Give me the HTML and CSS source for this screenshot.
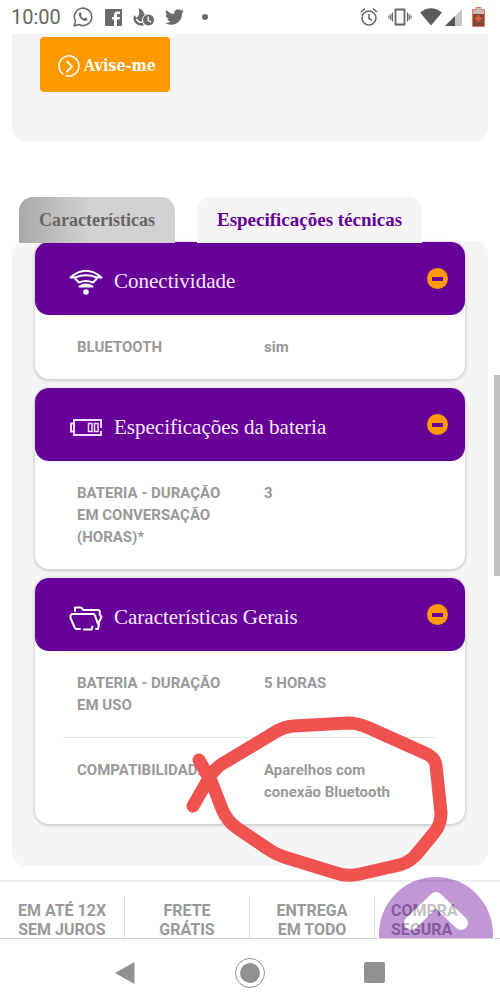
FILE: index.html
```html
<!DOCTYPE html>
<html lang="pt-BR">
<head>
<meta charset="utf-8">
<meta name="viewport" content="width=device-width, initial-scale=1">
<title>Especificações técnicas</title>
<link rel="stylesheet" href="styles.css">
</head>
<body>
<div class="phone">
  <header class="status">
    <span class="clock">10:00</span>
    <svg class="i-wa" viewBox="0 0 20 20" width="20" height="20"><path d="M1.2 18.8 2.5 14.100A8.700 8.700 0 1 1 6 17.500Z" fill="none" stroke="#6b6b6b" stroke-width="1.600" stroke-linejoin="round"/><path d="M6 6.200c.5-1.200 1.600-1.300 2-.5l.7 1.700c.1.400-.7 1-.7 1.400.7 1.400 1.800 2.300 3.100 2.900.5 0 1-1.200 1.500-1.100l1.800.9c.4.600-.3 1.900-1.200 2.300C10 14.800 4.800 9.500 6 6.200Z" fill="#6b6b6b"/></svg>
    <svg class="i-fb" viewBox="0 0 17 17" width="17" height="17"><rect width="17" height="17" rx="1" fill="#6b6b6b"/><path d="M9 17V10.500H7V8h2V6c0-2.600 1.500-3.600 3.500-3.600H15V5h-1.600c-1 0-1.400.4-1.400 1.300V8h3l-.4 2.500H12V17Z" fill="#fff"/></svg>
    <svg class="i-fire" viewBox="0 0 22 18" width="22" height="18"><path d="M5.500 0c5 2 6 4.500 5.200 7.500L12 5.500c1.500 1 1.500 2 1 3-4 2-4.300 6-2 9C4 18.500 0 14 .500 9.500L1.500 7l2 3C6.500 7 7 4 5.500 0Z" fill="#6b6b6b"/><path d="M3.500 11c1 2.500 3 3.500 5.500 3" stroke="#fff" stroke-width="1.500" fill="none"/><circle cx="15.500" cy="12" r="6" fill="#6b6b6b" stroke="#fff"/><path d="M15.200 8.500v4l3 1.500" fill="none" stroke="#fff" stroke-width="1.300"/></svg>
    <svg class="i-tw" viewBox="0 0 24 20" width="19" height="16"><path d="M23.950 2.570a10 10 0 0 1-2.820.77 4.960 4.960 0 0 0 2.160-2.720 9.900 9.900 0 0 1-3.120 1.180 4.920 4.920 0 0 0-8.380 4.480C7.690 6.100 4.070 4.130 1.640 1.160a4.820 4.820 0 0 0-.67 2.480c0 1.710.87 3.210 2.190 4.100a4.900 4.900 0 0 1-2.230-.62v.06a4.920 4.920 0 0 0 3.950 4.830 5 5 0 0 1-2.210.08 4.940 4.940 0 0 0 4.600 3.420A9.870 9.870 0 0 1 0 17.540a14 14 0 0 0 7.560 2.210c9.050 0 14-7.500 14-13.980 0-.21 0-.42-.02-.63a9.940 9.940 0 0 0 2.410-2.570Z" fill="#6b6b6b"/></svg>
    <span class="dot"></span>
    <svg class="i-alarm" viewBox="0 0 18 18" width="18" height="18"><g fill="none" stroke="#666" stroke-width="1.500"><circle cx="9" cy="10" r="7"/><path d="M9 6v4.500l3 1.800M1 4l4-3.300M17 4l-4-3.300"/></g></svg>
    <svg class="i-vib" viewBox="0 0 24 18" width="24" height="18"><path d="M7.500 1.500h9v15h-9Z" fill="none" stroke="#666" stroke-width="1.800"/><path d="M4.500 4.500v9M19.500 4.500v9M2.800 6v6M21.200 6v6M1 7.500v3M23 7.500v3" stroke="#666" stroke-width="1.200"/></svg>
    <svg class="i-wifi" viewBox="0 0 22 18" width="22" height="18"><path d="M0 4.500Q11-4 22 4.500L11 17.500Z" fill="#5c5c5c"/></svg>
    <svg class="i-sig" viewBox="0 0 17 17" width="17" height="17"><path d="M17 0v17H0Z" fill="#c6c6c6"/><path d="M10 7v10H0Z" fill="#555"/></svg>
    <svg class="i-bat" viewBox="0 0 13 20" width="13" height="20"><path d="M4 .5h5v2h3.500v17H.5v-17H4Z" fill="#7d4a36" stroke="#ee705f"/><path d="M4 1h5v2h3v4H1V3h3Z" fill="#c9bdb8"/><path d="M6.500 8v7M3 11.500h7" stroke="#f25a45" stroke-width="2"/></svg>
  </header>

  <main class="page">
    <section class="notify">
      <button class="notify-btn" type="button">
        <svg viewBox="0 0 22 22" width="22" height="22"><g fill="none" stroke="#fff" stroke-width="1.500" stroke-linecap="round"><path d="M5 19a10 10 0 1 1 3 1.500"/><path d="m9 6.500 5 5-5 5" stroke-width="1.800"/></g></svg>
        <span>Avise-me</span>
      </button>
    </section>

    <nav class="tabs">
      <button class="tab" type="button">Características</button>
      <button class="tab active" type="button">Especificações técnicas</button>
    </nav>

    <section class="panel">
      <article class="card">
        <button class="card-head" type="button">
          <svg viewBox="0 0 34 28" width="34" height="28"><g fill="none" stroke="#fff" stroke-width="2" stroke-linejoin="round"><path d="M1.500 9.500Q17-4 32.500 9.500H28Q17 5 6 9.500Z"/><path d="M6 10.500 10 14.500Q17 11.500 24 14.500L28 10.500"/><path d="M10.500 18.500Q17 14.500 23.500 18.500Z"/></g><circle cx="17" cy="24" r="2.800" fill="#fff"/></svg>
          <span class="title">Conectividade</span>
          <span class="minus"></span>
        </button>
        <table class="specs">
          <tr><th scope="row">BLUETOOTH</th><td>sim</td></tr>
        </table>
      </article>

      <article class="card">
        <button class="card-head" type="button">
          <svg viewBox="0 0 34 28" width="34" height="28"><g fill="none" stroke="#f3dcff" stroke-width="2"><path d="M32 14V6H5v15h27v-4M5 9.500H2v8h3"/><path d="M19.500 9.500h3.500v8h-3.500ZM25.500 9.500H29v8h-3.500Z" stroke-width="1.500"/></g></svg>
          <span class="title">Especificações da bateria</span>
          <span class="minus"></span>
        </button>
        <table class="specs">
          <tr><th scope="row">BATERIA - DURAÇÃO EM CONVERSAÇÃO (HORAS)*</th><td>3</td></tr>
        </table>
      </article>

      <article class="card">
        <button class="card-head" type="button">
          <svg viewBox="0 0 34 28" width="34" height="28"><g fill="none" stroke="#fff" stroke-width="2" stroke-linecap="round" stroke-linejoin="round"><path d="M6 7V3.500h6L14.500 6H29q2 0 2 3M11 25H7.500Q6 25 5 22L1.500 14Q1 10 4 10h20q2 0 2.500 3L29 20l3.500-7-2-3"/><path d="M15 25.500h7.500l1-3M27 25h2l1-5"/></g></svg>
          <span class="title">Características Gerais</span>
          <span class="minus"></span>
        </button>
        <table class="specs">
          <tr><th scope="row">BATERIA - DURAÇÃO EM USO</th><td>5 HORAS</td></tr>
          <tr><th scope="row">COMPATIBILIDADE</th><td>Aparelhos com conexão Bluetooth</td></tr>
        </table>
      </article>
    </section>

    <footer class="perks">
      <div class="perk">EM ATÉ 12X<br>SEM JUROS</div>
      <div class="perk">FRETE<br>GRÁTIS</div>
      <div class="perk">ENTREGA<br>EM TODO</div>
      <div class="perk last">COMPRA<br>SEGURA</div>
    </footer>

    <button class="to-top" type="button" aria-label="Voltar ao topo">
      <svg viewBox="0 0 114 114" width="114" height="114"><path d="m32 46 25-24 25 24" fill="none" stroke="#fff" stroke-width="14" stroke-linecap="round" stroke-linejoin="round"/></svg>
    </button>
    <span class="scroll-thumb"></span>
  </main>

  <nav class="sysnav">
    <button type="button" aria-label="Voltar"><svg viewBox="0 0 32 32" width="32" height="32"><path d="M6 16 25.500 5v22Z" fill="#919191"/></svg></button>
    <button type="button" aria-label="Início"><svg viewBox="0 0 32 32" width="32" height="32"><circle cx="16" cy="16" r="14.500" fill="none" stroke="#919191"/><circle cx="16" cy="16" r="10" fill="#919191"/></svg></button>
    <button type="button" aria-label="Recentes"><svg viewBox="0 0 32 32" width="32" height="32"><rect x="5" y="5" width="21" height="21" rx="2" fill="#919191"/></svg></button>
  </nav>

  <svg class="scribble" viewBox="0 0 500 1006"><path d="M199 760 212 783 222 809Q227 821 237 828L268 849Q275 854 284 857L336 873Q348 877 360 874L395 866Q407 864 415 856L434 833Q441 825 441 813L436 765Q435 758 427 754L369 728Q358 723 348 723L293 726Q284 727 277 731L222 764Q214 769 208 780L193 806" fill="none" stroke="#ef524f" stroke-width="13" stroke-linecap="round" stroke-linejoin="round"/></svg>
</div>
</body>
</html>
```

FILE: styles.css
```css
* { box-sizing: border-box; }

body {
  margin: 0;
  background: #fff;
  font-family: Roboto, "Liberation Sans", sans-serif;
}

button {
  margin: 0;
  padding: 0;
  border: 0;
  background: none;
  font: inherit;
  color: inherit;
}

svg { display: block; flex: none; }

.phone {
  position: relative;
  display: flex;
  flex-direction: column;
  height: 100vh;
  overflow: hidden;
}

.status {
  display: flex;
  align-items: center;
  height: 34px;
  padding: 0 15px 0 11px;
  flex: none;
}
.clock { font-size: 20px; color: #666; margin-right: 12px; }
.i-wa { margin-right: 12px; }
.i-fb { margin-right: 11px; }
.i-fire { margin-right: 10px; }
.i-tw { margin-right: 18px; }
.dot { width: 6px; height: 6px; border-radius: 50%; background: #6b6b6b; }
.i-alarm { margin-left: auto; margin-right: 10px; }
.i-vib { margin-right: 8px; }
.i-wifi { margin-right: 3px; }
.i-sig { margin-right: 10px; }

.page {
  position: relative;
  flex: 1;
  min-height: 0;
  overflow: hidden;
}

.notify {
  height: 107px;
  margin: 0 12px;
  padding: 3px 28px;
  background: #f5f5f5;
  border-radius: 0 0 14px 14px;
}
.notify-btn {
  display: flex;
  align-items: center;
  gap: 4px;
  height: 55px;
  padding: 2px 14px 0 18px;
  border-radius: 4px;
  background: #ff9900;
  color: #fff;
  font: bold 16px "DejaVu Serif Condensed", "DejaVu Serif", serif;
}

.tabs {
  position: relative;
  z-index: 1;
  display: flex;
  gap: 22px;
  margin: 56px 19px 0;
}
.tab {
  height: 46px;
  padding: 0 20px;
  border-radius: 14px 14px 0 0;
  background: linear-gradient(90deg, #a9a9a9, #d2d2d2 45%);
  color: #666;
  font: bold 18px "Liberation Serif", serif;
  white-space: nowrap;
}
.tab.active { background: #f5f5f5; color: #660099; font-size: 19px; }

.panel {
  display: flex;
  flex-direction: column;
  gap: 9px;
  margin: -2px 12px 0;
  padding: 1px 23px 42px;
  background: #f5f5f5;
  border-radius: 14px;
}

.card {
  background: #fff;
  border-radius: 14px;
  box-shadow: 0 1px 3px 1px #ccc;
}
.card-head {
  display: flex;
  align-items: center;
  width: 100%;
  height: 73px;
  padding: 6px 17px 0 34px;
  border-radius: 14px;
  background: #660099;
  color: #fbeaff;
  font: 21px "Liberation Serif", serif;
  text-align: left;
}
.title { flex: 1; margin-left: 11px; }
.minus {
  display: flex;
  align-items: center;
  justify-content: center;
  width: 21px;
  height: 21px;
  margin-bottom: 6px;
  border-radius: 50%;
  background: #ff9900;
}
.minus::before { content: ""; width: 11px; height: 4px; background: #660099; }

.specs {
  width: calc(100% - 56px);
  margin: 0 28px;
  border-collapse: collapse;
  table-layout: fixed;
  color: #999;
  font-size: 15px;
  line-height: 22px;
}
.specs th, .specs td {
  padding: 21px 14px;
  font-weight: 700;
  text-align: left;
  vertical-align: top;
}
.specs tr + tr { border-top: 1px solid #e6e6e6; }

.perks {
  display: grid;
  grid-template-columns: repeat(4, 1fr);
  margin-top: 14px;
  padding-top: 14px;
  border-top: 2px solid #eee;
}
.perk {
  padding: 5px 2px 20px;
  border-right: 1px solid #ddd;
  color: #999;
  font-size: 16px;
  font-weight: 700;
  line-height: 19px;
  text-align: center;
}
.perk.last { padding-left: 16px; border-right: 0; text-align: left; }

.to-top {
  position: absolute;
  right: 7px;
  bottom: -53px;
  border-radius: 50%;
  background: #660099;
  opacity: 0.4;
}

.scroll-thumb {
  position: absolute;
  right: 0;
  top: 341px;
  width: 6px;
  height: 201px;
  background: #c0c0c0;
}

.sysnav {
  display: flex;
  align-items: center;
  justify-content: space-around;
  height: 68px;
  padding: 0 62px;
  flex: none;
  border-top: 1px solid #d0d0d0;
}

.scribble {
  position: absolute;
  left: 0;
  top: 0;
  width: 100%;
  pointer-events: none;
}
```
